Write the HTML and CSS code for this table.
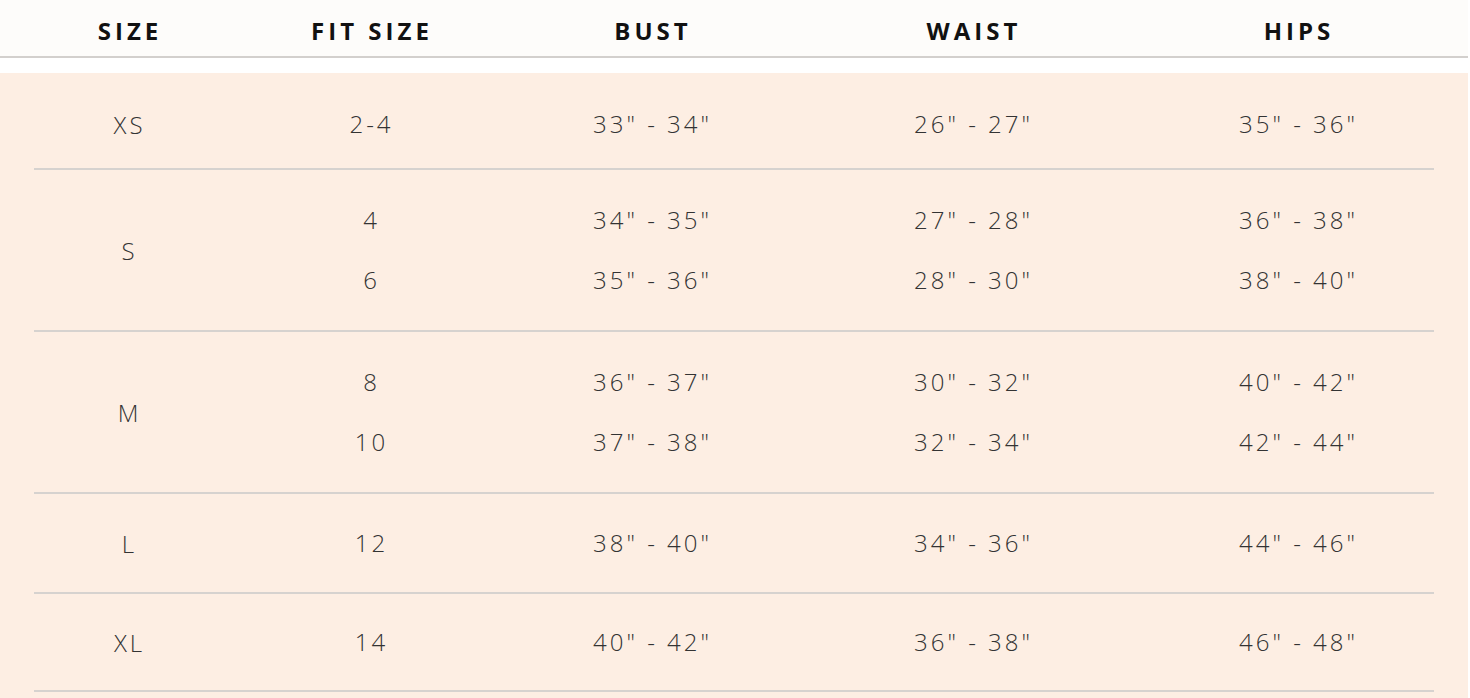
FILE: index.html
```html
<!DOCTYPE html>
<html lang="en">
<head>
<meta charset="utf-8">
<title>Size Chart</title>
<link rel="stylesheet" href="styles.css">
</head>
<body>
<div class="chart">
  <div class="head">
    <div class="cols">
      <div class="th">SIZE</div>
      <div class="th">FIT SIZE</div>
      <div class="th">BUST</div>
      <div class="th">WAIST</div>
      <div class="th">HIPS</div>
    </div>
  </div>
  <div class="body">
    <div class="cols row row-first">
      <div class="cell size">XS</div>
      <div class="cell"><span>2-4</span></div>
      <div class="cell"><span>33" - 34"</span></div>
      <div class="cell"><span>26" - 27"</span></div>
      <div class="cell"><span>35" - 36"</span></div>
    </div>
    <div class="cols row row-double">
      <div class="cell size">S</div>
      <div class="cell"><span>4</span><span>6</span></div>
      <div class="cell"><span>34" - 35"</span><span>35" - 36"</span></div>
      <div class="cell"><span>27" - 28"</span><span>28" - 30"</span></div>
      <div class="cell"><span>36" - 38"</span><span>38" - 40"</span></div>
    </div>
    <div class="cols row row-double">
      <div class="cell size">M</div>
      <div class="cell"><span>8</span><span>10</span></div>
      <div class="cell"><span>36" - 37"</span><span>37" - 38"</span></div>
      <div class="cell"><span>30" - 32"</span><span>32" - 34"</span></div>
      <div class="cell"><span>40" - 42"</span><span>42" - 44"</span></div>
    </div>
    <div class="cols row row-l">
      <div class="cell size">L</div>
      <div class="cell"><span>12</span></div>
      <div class="cell"><span>38" - 40"</span></div>
      <div class="cell"><span>34" - 36"</span></div>
      <div class="cell"><span>44" - 46"</span></div>
    </div>
    <div class="cols row row-xl">
      <div class="cell size">XL</div>
      <div class="cell"><span>14</span></div>
      <div class="cell"><span>40" - 42"</span></div>
      <div class="cell"><span>36" - 38"</span></div>
      <div class="cell"><span>46" - 48"</span></div>
    </div>
  </div>
</div>
</body>
</html>
```
FILE: styles.css
```css
html, body {
  margin: 0;
  padding: 0;
  background: #ffffff;
}
body {
  font-family: "Open Sans", "Liberation Sans", sans-serif;
  width: 1468px;
  height: 698px;
  overflow: hidden;
}
.chart {
  width: 1468px;
}
.head {
  background: #fdfcfa;
  height: 56px;
  border-bottom: 2px solid #d3d0cd;
  margin-bottom: 15px;
}
.cols {
  display: grid;
  grid-template-columns: 188px 296px 266px 376px 1fr;
  margin: 0 34px;
}
.head .cols {
  height: 56px;
  align-items: center;
}
.th {
  text-align: center;
  font-weight: 700;
  font-size: 24px;
  letter-spacing: 4px;
  text-indent: 4px;
  color: #111111;
  padding-top: 4px;
}
.body {
  background: #fdeee3;
  height: 627px;
  padding-top: 0;
}
.row {
  border-bottom: 2px solid #d6d2cf;
}
.cell {
  display: flex;
  flex-direction: column;
  align-items: center;
  justify-content: center;
  font-size: 24px;
  font-weight: 350;
  letter-spacing: 3px;
  color: #333333;
}
.cell span {
  display: block;
  height: 60px;
  line-height: 60px;
  text-indent: 3px;
}
.size {
  text-indent: 3px;
}
.row-first { padding: 21px 0 14px; }
.row-double { padding: 20px 0; }
.row-l { padding: 19px 0; }
.row-xl { padding: 18px 0; }
```
